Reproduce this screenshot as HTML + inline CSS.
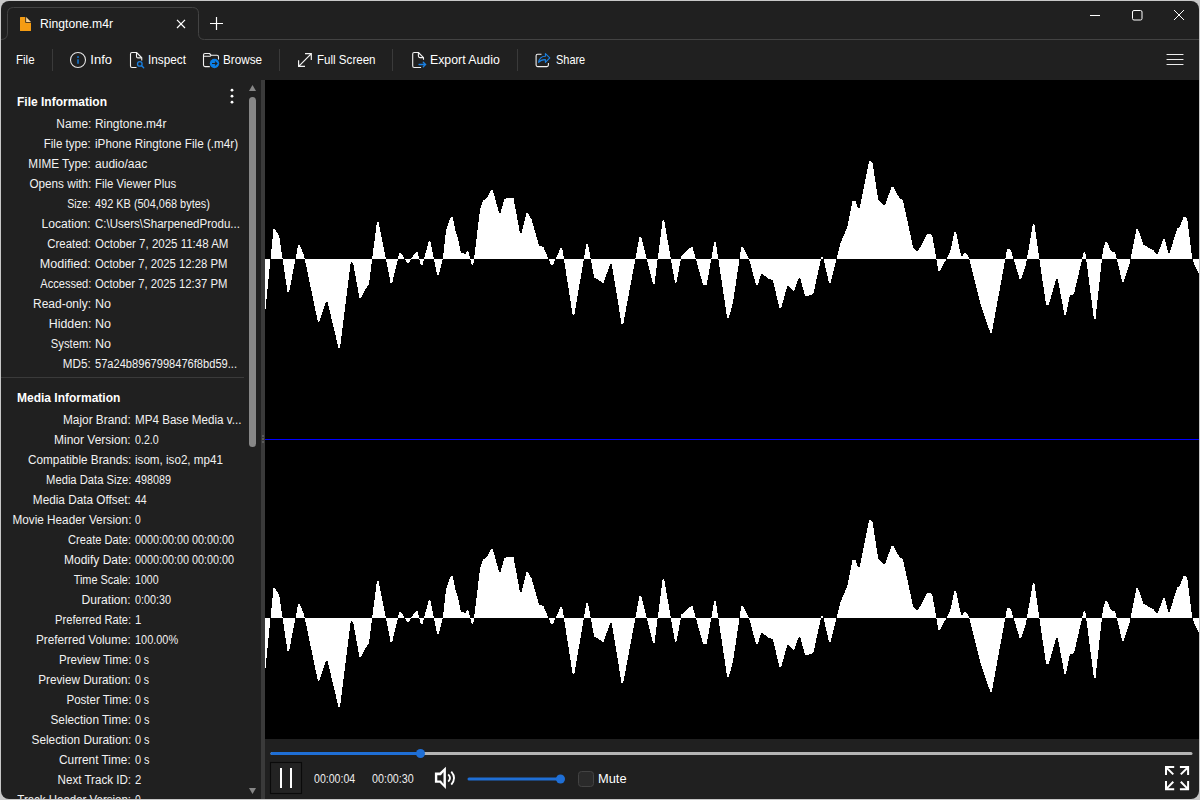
<!DOCTYPE html>
<html><head><meta charset="utf-8">
<style>
html,body{margin:0;padding:0;width:1200px;height:800px;overflow:hidden;background:#c8c8c8;font-family:"Liberation Sans", sans-serif;}
#win{position:absolute;left:1px;top:1px;width:1198px;height:798px;border-radius:8px;background:#202020;overflow:hidden;}
#c{position:absolute;left:-1px;top:-1px;width:1200px;height:800px;}
.t{position:absolute;white-space:nowrap;color:#fff;line-height:18px;}
.lab,.val{position:absolute;white-space:nowrap;color:#f2f2f2;font-size:12px;line-height:18px;}
.lab span{display:inline-block;transform-origin:100% 50%;}
.val span{display:inline-block;transform-origin:0 50%;}
.hd{position:absolute;white-space:nowrap;color:#fff;font-size:12px;font-weight:bold;line-height:18px;}
svg{position:absolute;left:0;top:0;}
</style></head><body>
<div id="win"><div id="c">

<!-- tab strip -->
<svg width="1200" height="40" style="left:0;top:0">
<path d="M1 39.5 Q7.5 39.5 7.5 33 L7.5 13.5 Q7.5 7.5 13.5 7.5 L192.5 7.5 Q198.5 7.5 198.5 13.5 L198.5 33.5 Q198.5 39.5 204.5 39.5 L1200 39.5" fill="none" stroke="#434343" stroke-width="1"/>
<path d="M20.6 17 L25.3 17 L25.3 22.8 L31 22.8 L31 30.4 Q31 31 30.4 31 L20.6 31 Q20 31 20 30.4 L20 17.6 Q20 17 20.6 17 Z" fill="#f59c12"/>
<path d="M26.1 17 L31 21.9 L26.1 21.9 Z" fill="#f9d49a"/>
<path d="M177 19.8 L185 28 M185 19.8 L177 28" stroke="#fff" stroke-width="1.2" fill="none"/>
<path d="M210 23.5 L223 23.5 M216.5 17 L216.5 30" stroke="#fff" stroke-width="1.2" fill="none"/>
<path d="M1090 15.5 L1100 15.5" stroke="#fff" stroke-width="1"/>
<rect x="1132.5" y="10.5" width="9.5" height="9.5" rx="1.5" stroke="#fff" stroke-width="1" fill="none"/>
<path d="M1174 10 L1184 20 M1184 10 L1174 20" stroke="#fff" stroke-width="1" fill="none"/>
</svg>
<div class="t" style="left:40.30px;top:15px;font-size:13px;"><span style="display:inline-block;transform-origin:0 50%;transform:scaleX(0.9351)">Ringtone.m4r</span></div>

<!-- toolbar -->
<div class="t" style="left:16.23px;top:51px;font-size:13px;"><span style="display:inline-block;transform-origin:0 50%;transform:scaleX(0.8851)">File</span></div>
<div class="t" style="left:90.30px;top:51px;font-size:13px;"><span style="display:inline-block;transform-origin:0 50%;transform:scaleX(1.0000)">Info</span></div>
<div class="t" style="left:148.30px;top:51px;font-size:13px;"><span style="display:inline-block;transform-origin:0 50%;transform:scaleX(0.9051)">Inspect</span></div>
<div class="t" style="left:223.44px;top:51px;font-size:13px;"><span style="display:inline-block;transform-origin:0 50%;transform:scaleX(0.9002)">Browse</span></div>
<div class="t" style="left:317.23px;top:51px;font-size:13px;"><span style="display:inline-block;transform-origin:0 50%;transform:scaleX(0.8906)">Full Screen</span></div>
<div class="t" style="left:430.23px;top:51px;font-size:13px;"><span style="display:inline-block;transform-origin:0 50%;transform:scaleX(0.9466)">Export Audio</span></div>
<div class="t" style="left:555.58px;top:51px;font-size:13px;"><span style="display:inline-block;transform-origin:0 50%;transform:scaleX(0.8417)">Share</span></div>
<svg width="1200" height="80" style="left:0;top:0">
<g stroke="#3a3a3a" stroke-width="1">
<path d="M52.5 49 L52.5 71 M279.5 49 L279.5 71 M392.5 49 L392.5 71 M517.5 49 L517.5 71"/>
</g>
<g stroke="#ececec" stroke-width="1.2" stroke-linecap="round">
<path d="M1167 54.5 L1183 54.5 M1167 59.5 L1183 59.5 M1167 64.5 L1183 64.5"/>
</g>
<!-- info -->
<circle cx="78" cy="60" r="7.5" stroke="#e4e4e4" stroke-width="1.1" fill="none"/>
<rect x="77" y="56" width="2" height="2" rx="0.6" fill="#1562a8"/>
<rect x="77" y="59.2" width="2" height="4.6" rx="0.4" fill="#1562a8"/>
<!-- inspect -->
<g fill="none" stroke="#f2f2f2" stroke-width="1.1" stroke-linejoin="round">
<path d="M136.5 67.5 H132 Q130.5 67.5 130.5 66 V54 Q130.5 52.5 132 52.5 H136.5 L141.75 57.75 V60.5"/>
<path d="M136.5 52.6 V56.4 Q136.5 57.9 138 57.9 H141.7"/>
</g>
<circle cx="139.8" cy="63.9" r="2.3" stroke="#1a80e2" stroke-width="1.3" fill="none"/>
<path d="M141.6 65.7 L143.7 67.7" stroke="#1a80e2" stroke-width="1.4" stroke-linecap="round"/>
<!-- browse -->
<g fill="none" stroke="#f2f2f2" stroke-width="1.1" stroke-linejoin="round">
<path d="M209.8 66.6 H205 Q203.5 66.6 203.5 65.1 V55 Q203.5 53.5 205 53.5 H209.5 L211.2 55.3 H217 Q218.5 55.3 218.5 56.8 V59.5"/>
<path d="M203.5 56.3 H210 L211.2 55.3"/>
</g>
<circle cx="214.5" cy="63.5" r="4.7" fill="#0b7fe6"/>
<path d="M212 63.5 H216.8 M215 61.7 L216.9 63.5 L215 65.3" stroke="#202020" stroke-width="1.1" fill="none"/>
<!-- full screen -->
<g fill="none" stroke="#f2f2f2" stroke-width="1.2" stroke-linejoin="miter">
<path d="M299.2 65.8 L311.1 53.9 M305 53.7 H311.3 V60 M298.6 60.2 V66.3 H305"/>
</g>
<!-- export -->
<g fill="none" stroke="#f2f2f2" stroke-width="1.1" stroke-linejoin="round">
<path d="M421.1 67.5 H414.2 Q412.7 67.5 412.7 66 V54 Q412.7 52.5 414.2 52.5 H418.4 L423.5 57.6 V59.7"/>
<path d="M418.4 52.6 V56.1 Q418.4 57.6 419.9 57.6 H423.4"/>
</g>
<path d="M419 64.5 H425.6 M423.3 62.2 L425.6 64.5 L423.3 66.8" stroke="#1a80e2" stroke-width="1.3" fill="none" stroke-linecap="round"/>
<!-- share -->
<path d="M541.5 54.3 H537.6 Q536.1 54.3 536.1 55.8 V65.1 Q536.1 66.6 537.6 66.6 H546.9 Q548.4 66.6 548.4 65.1 V63" fill="none" stroke="#f2f2f2" stroke-width="1.1"/>
<path d="M538.6 62.4 Q539.5 56.2 545.4 56.2 V53.6 L549.8 57.9 L545.4 62.3 V59.6 Q541 59.4 538.6 62.4 Z" fill="none" stroke="#1a80e2" stroke-width="1.1" stroke-linejoin="round"/>
</svg>

<!-- sidebar -->
<div class="hd" style="left:17px;top:93px">File Information</div>
<div class="lab" style="top:115px;right:1109.0px"><span style="transform:scaleX(0.9912)">Name:</span></div>
<div class="val" style="top:115px;left:95.0px"><span style="transform:scaleX(0.9916)">Ringtone.m4r</span></div>
<div class="lab" style="top:135px;right:1109.0px"><span style="transform:scaleX(0.9660)">File type:</span></div>
<div class="val" style="top:135px;left:95.0px"><span style="transform:scaleX(0.9753)">iPhone Ringtone File (.m4r)</span></div>
<div class="lab" style="top:155px;right:1109.0px"><span style="transform:scaleX(0.9790)">MIME Type:</span></div>
<div class="val" style="top:155px;left:95.0px"><span style="transform:scaleX(1.0040)">audio/aac</span></div>
<div class="lab" style="top:175px;right:1109.0px"><span style="transform:scaleX(0.9777)">Opens with:</span></div>
<div class="val" style="top:175px;left:95.0px"><span style="transform:scaleX(0.9460)">File Viewer Plus</span></div>
<div class="lab" style="top:195px;right:1109.0px"><span style="transform:scaleX(0.8800)">Size:</span></div>
<div class="val" style="top:195px;left:95.0px"><span style="transform:scaleX(0.9111)">492 KB (504,068 bytes)</span></div>
<div class="lab" style="top:215px;right:1109.0px"><span style="transform:scaleX(1.0086)">Location:</span></div>
<div class="val" style="top:215px;left:95.0px"><span style="transform:scaleX(0.9614)">C:\Users\SharpenedProdu...</span></div>
<div class="lab" style="top:235px;right:1109.0px"><span style="transform:scaleX(0.9489)">Created:</span></div>
<div class="val" style="top:235px;left:95.0px"><span style="transform:scaleX(0.9583)">October 7, 2025 11:48 AM</span></div>
<div class="lab" style="top:255px;right:1109.0px"><span style="transform:scaleX(1.0470)">Modified:</span></div>
<div class="val" style="top:255px;left:95.0px"><span style="transform:scaleX(0.9400)">October 7, 2025 12:28 PM</span></div>
<div class="lab" style="top:275px;right:1109.0px"><span style="transform:scaleX(0.9228)">Accessed:</span></div>
<div class="val" style="top:275px;left:95.0px"><span style="transform:scaleX(0.9400)">October 7, 2025 12:37 PM</span></div>
<div class="lab" style="top:295px;right:1109.0px"><span style="transform:scaleX(1.0000)">Read-only:</span></div>
<div class="val" style="top:295px;left:95.0px"><span style="transform:scaleX(1.0453)">No</span></div>
<div class="lab" style="top:315px;right:1109.0px"><span style="transform:scaleX(1.0302)">Hidden:</span></div>
<div class="val" style="top:315px;left:95.0px"><span style="transform:scaleX(1.0453)">No</span></div>
<div class="lab" style="top:335px;right:1109.0px"><span style="transform:scaleX(0.9340)">System:</span></div>
<div class="val" style="top:335px;left:95.0px"><span style="transform:scaleX(1.0453)">No</span></div>
<div class="lab" style="top:355px;right:1109.0px"><span style="transform:scaleX(0.9711)">MD5:</span></div>
<div class="val" style="top:355px;left:95.0px"><span style="transform:scaleX(0.9250)">57a24b8967998476f8bd59...</span></div>
<div class="hd" style="left:17px;top:389px">Media Information</div>
<div class="lab" style="top:411px;right:1069.0px"><span style="transform:scaleX(0.9852)">Major Brand:</span></div>
<div class="val" style="top:411px;left:135.0px"><span style="transform:scaleX(0.9686)">MP4 Base Media v...</span></div>
<div class="lab" style="top:431px;right:1069.0px"><span style="transform:scaleX(1.0001)">Minor Version:</span></div>
<div class="val" style="top:431px;left:135.0px"><span style="transform:scaleX(0.8889)">0.2.0</span></div>
<div class="lab" style="top:451px;right:1069.0px"><span style="transform:scaleX(0.9808)">Compatible Brands:</span></div>
<div class="val" style="top:451px;left:135.0px"><span style="transform:scaleX(0.9693)">isom, iso2, mp41</span></div>
<div class="lab" style="top:471px;right:1069.0px"><span style="transform:scaleX(0.9334)">Media Data Size:</span></div>
<div class="val" style="top:471px;left:135.0px"><span style="transform:scaleX(0.9000)">498089</span></div>
<div class="lab" style="top:491px;right:1069.0px"><span style="transform:scaleX(0.9817)">Media Data Offset:</span></div>
<div class="val" style="top:491px;left:135.0px"><span style="transform:scaleX(0.8763)">44</span></div>
<div class="lab" style="top:511px;right:1069.0px"><span style="transform:scaleX(0.9800)">Movie Header Version:</span></div>
<div class="val" style="top:511px;left:135.0px"><span style="transform:scaleX(0.8571)">0</span></div>
<div class="lab" style="top:531px;right:1069.0px"><span style="transform:scaleX(0.9256)">Create Date:</span></div>
<div class="val" style="top:531px;left:135.0px"><span style="transform:scaleX(0.9000)">0000:00:00 00:00:00</span></div>
<div class="lab" style="top:551px;right:1069.0px"><span style="transform:scaleX(1.0002)">Modify Date:</span></div>
<div class="val" style="top:551px;left:135.0px"><span style="transform:scaleX(0.9000)">0000:00:00 00:00:00</span></div>
<div class="lab" style="top:571px;right:1069.0px"><span style="transform:scaleX(0.9097)">Time Scale:</span></div>
<div class="val" style="top:571px;left:135.0px"><span style="transform:scaleX(0.8862)">1000</span></div>
<div class="lab" style="top:591px;right:1069.0px"><span style="transform:scaleX(1.0088)">Duration:</span></div>
<div class="val" style="top:591px;left:135.0px"><span style="transform:scaleX(0.9000)">0:00:30</span></div>
<div class="lab" style="top:611px;right:1069.0px"><span style="transform:scaleX(0.9254)">Preferred Rate:</span></div>
<div class="val" style="top:611px;left:135.0px"><span style="transform:scaleX(0.9519)">1</span></div>
<div class="lab" style="top:631px;right:1069.0px"><span style="transform:scaleX(0.9790)">Preferred Volume:</span></div>
<div class="val" style="top:631px;left:135.0px"><span style="transform:scaleX(0.9095)">100.00%</span></div>
<div class="lab" style="top:651px;right:1069.0px"><span style="transform:scaleX(0.9596)">Preview Time:</span></div>
<div class="val" style="top:651px;left:135.0px"><span style="transform:scaleX(0.8750)">0 s</span></div>
<div class="lab" style="top:671px;right:1069.0px"><span style="transform:scaleX(0.9764)">Preview Duration:</span></div>
<div class="val" style="top:671px;left:135.0px"><span style="transform:scaleX(0.8750)">0 s</span></div>
<div class="lab" style="top:691px;right:1069.0px"><span style="transform:scaleX(0.9638)">Poster Time:</span></div>
<div class="val" style="top:691px;left:135.0px"><span style="transform:scaleX(0.8750)">0 s</span></div>
<div class="lab" style="top:711px;right:1069.0px"><span style="transform:scaleX(0.9816)">Selection Time:</span></div>
<div class="val" style="top:711px;left:135.0px"><span style="transform:scaleX(0.9082)">0 s</span></div>
<div class="lab" style="top:731px;right:1069.0px"><span style="transform:scaleX(0.9850)">Selection Duration:</span></div>
<div class="val" style="top:731px;left:135.0px"><span style="transform:scaleX(0.9082)">0 s</span></div>
<div class="lab" style="top:751px;right:1069.0px"><span style="transform:scaleX(0.9861)">Current Time:</span></div>
<div class="val" style="top:751px;left:135.0px"><span style="transform:scaleX(0.9082)">0 s</span></div>
<div class="lab" style="top:771px;right:1069.0px"><span style="transform:scaleX(0.9663)">Next Track ID:</span></div>
<div class="val" style="top:771px;left:135.0px"><span style="transform:scaleX(0.9386)">2</span></div>
<div class="lab" style="top:791px;right:1069.0px"><span style="transform:scaleX(0.9550)">Track Header Version:</span></div>
<div class="val" style="top:791px;left:135.0px"><span style="transform:scaleX(0.8600)">0</span></div>
<svg width="270" height="800" style="left:0;top:0">
<rect x="1" y="377" width="243" height="1" fill="#3a3a3a"/>
<circle cx="232" cy="90.2" r="1.4" fill="#fff"/><circle cx="232" cy="96.2" r="1.4" fill="#fff"/><circle cx="232" cy="102.2" r="1.4" fill="#fff"/>
<path d="M249 91 L256 91 L252.5 85 Z" fill="#878787"/>
<path d="M249 788 L256 788 L252.5 794 Z" fill="#878787"/>
<rect x="249" y="97" width="7" height="350" rx="3.5" fill="#878787"/>
<rect x="261" y="80" width="4" height="720" fill="#3a3a3a"/>
<rect x="262" y="435" width="2" height="2" fill="#5a5a5a"/><rect x="262" y="438" width="2" height="2" fill="#5a5a5a"/><rect x="262" y="441" width="2" height="2" fill="#5a5a5a"/>
</svg>

<!-- waveform -->
<svg width="1200" height="800" style="left:0;top:0">
<rect x="265" y="80" width="935" height="659" fill="#000"/>
<path d="M265 259 L265.00 314.00 L273.50 229.40 L275.10 229.40 L279.20 236.00 L287.50 292.00 L289.10 292.00 L298.20 245.00 L299.80 245.00 L304.00 255.50 L317.80 321.50 L319.40 321.50 L326.00 302.00 L327.60 302.00 L338.40 347.60 L340.00 347.60 L350.70 262.40 L352.30 262.40 L353.50 265.00 L359.50 298.00 L361.10 298.00 L365.80 288.50 L369.00 284.00 L376.90 221.70 L378.50 221.70 L390.60 283.00 L392.20 283.00 L399.40 252.70 L401.00 252.70 L407.10 263.20 L408.70 263.20 L414.00 254.00 L415.90 252.20 L417.50 252.20 L420.80 265.00 L422.40 265.00 L428.80 241.20 L430.40 241.20 L437.10 275.30 L438.70 275.30 L443.00 258.00 L446.00 231.00 L449.00 221.00 L451.10 216.50 L452.70 216.50 L455.00 229.00 L458.00 238.00 L461.00 253.00 L464.20 253.50 L465.80 253.50 L466.80 251.40 L468.40 251.40 L471.70 265.00 L473.30 265.00 L480.00 210.00 L482.70 201.00 L487.70 197.20 L491.00 189.50 L492.60 189.50 L499.00 212.90 L500.60 212.90 L504.20 199.10 L506.10 198.30 L513.50 198.30 L519.90 232.70 L521.50 232.70 L526.50 213.40 L528.10 213.40 L531.70 219.70 L539.10 245.90 L543.20 246.70 L551.20 265.10 L552.80 265.10 L560.60 248.00 L562.20 248.00 L572.70 315.20 L574.30 315.20 L586.40 244.00 L588.00 244.00 L594.10 277.50 L598.20 279.70 L602.10 282.50 L603.70 282.50 L610.10 264.30 L611.70 264.30 L621.60 324.20 L623.20 324.20 L639.50 236.80 L641.10 236.80 L653.00 283.50 L654.60 283.50 L662.60 220.30 L664.20 220.30 L674.90 282.50 L676.50 282.50 L681.50 255.50 L690.90 247.20 L692.50 247.20 L703.20 285.20 L704.80 285.20 L706.80 284.40 L714.20 242.30 L715.80 242.30 L727.20 318.20 L728.80 318.20 L733.00 302.30 L741.30 247.20 L742.90 247.20 L748.90 258.30 L756.10 285.20 L757.70 285.20 L761.10 274.20 L762.70 274.20 L768.70 278.90 L772.90 280.20 L779.50 308.30 L781.10 308.30 L787.20 286.30 L788.80 286.30 L792.70 290.70 L794.30 290.70 L798.70 278.00 L800.30 278.00 L805.00 296.20 L806.60 296.20 L813.30 294.00 L821.50 256.90 L823.10 256.90 L829.00 283.00 L830.60 283.00 L840.20 244.00 L847.10 227.50 L852.60 201.00 L853.70 200.50 L855.30 200.50 L858.10 208.20 L859.70 208.20 L869.10 160.60 L870.70 160.60 L872.60 163.40 L878.10 199.10 L883.40 205.40 L885.00 205.40 L891.60 186.70 L893.20 186.70 L899.30 197.80 L902.90 200.00 L913.10 247.20 L916.40 250.60 L918.00 250.60 L921.30 245.90 L927.40 233.50 L929.00 233.50 L932.30 235.70 L938.40 270.60 L940.00 270.60 L946.10 259.60 L950.30 251.40 L954.40 232.10 L956.00 232.10 L961.00 255.50 L962.60 255.50 L964.60 253.30 L966.20 253.30 L969.00 257.70 L980.00 302.30 L990.20 332.50 L991.80 332.50 L1007.20 248.60 L1008.80 248.60 L1010.80 250.00 L1019.60 278.90 L1021.20 278.90 L1025.90 265.10 L1032.80 223.90 L1034.40 223.90 L1039.60 261.00 L1046.00 304.20 L1047.10 305.00 L1048.70 305.00 L1056.20 278.90 L1057.80 278.90 L1064.40 314.60 L1066.00 314.60 L1069.90 295.40 L1074.00 294.00 L1083.70 252.20 L1085.30 252.20 L1093.90 318.80 L1095.50 318.80 L1102.90 250.00 L1105.40 241.80 L1107.00 241.80 L1111.20 251.40 L1115.30 252.70 L1122.20 281.60 L1123.80 281.60 L1129.60 263.80 L1136.50 229.40 L1138.10 229.40 L1143.30 244.50 L1146.90 246.70 L1153.20 250.00 L1156.30 254.10 L1157.90 254.10 L1163.20 238.80 L1164.80 238.80 L1168.10 252.70 L1169.70 252.70 L1177.20 228.50 L1179.90 226.60 L1183.80 216.50 L1185.40 216.50 L1187.40 219.70 L1192.30 258.80 L1195.10 266.50 L1198.40 272.50 L1200.00 275.00 L1200 259 Z" fill="#fff" shape-rendering="crispEdges"/>
<path d="M265 618 L265.00 673.00 L273.50 588.40 L275.10 588.40 L279.20 595.00 L287.50 651.00 L289.10 651.00 L298.20 604.00 L299.80 604.00 L304.00 614.50 L317.80 680.50 L319.40 680.50 L326.00 661.00 L327.60 661.00 L338.40 706.60 L340.00 706.60 L350.70 621.40 L352.30 621.40 L353.50 624.00 L359.50 657.00 L361.10 657.00 L365.80 647.50 L369.00 643.00 L376.90 580.70 L378.50 580.70 L390.60 642.00 L392.20 642.00 L399.40 611.70 L401.00 611.70 L407.10 622.20 L408.70 622.20 L414.00 613.00 L415.90 611.20 L417.50 611.20 L420.80 624.00 L422.40 624.00 L428.80 600.20 L430.40 600.20 L437.10 634.30 L438.70 634.30 L443.00 617.00 L446.00 590.00 L449.00 580.00 L451.10 575.50 L452.70 575.50 L455.00 588.00 L458.00 597.00 L461.00 612.00 L464.20 612.50 L465.80 612.50 L466.80 610.40 L468.40 610.40 L471.70 624.00 L473.30 624.00 L480.00 569.00 L482.70 560.00 L487.70 556.20 L491.00 548.50 L492.60 548.50 L499.00 571.90 L500.60 571.90 L504.20 558.10 L506.10 557.30 L513.50 557.30 L519.90 591.70 L521.50 591.70 L526.50 572.40 L528.10 572.40 L531.70 578.70 L539.10 604.90 L543.20 605.70 L551.20 624.10 L552.80 624.10 L560.60 607.00 L562.20 607.00 L572.70 674.20 L574.30 674.20 L586.40 603.00 L588.00 603.00 L594.10 636.50 L598.20 638.70 L602.10 641.50 L603.70 641.50 L610.10 623.30 L611.70 623.30 L621.60 683.20 L623.20 683.20 L639.50 595.80 L641.10 595.80 L653.00 642.50 L654.60 642.50 L662.60 579.30 L664.20 579.30 L674.90 641.50 L676.50 641.50 L681.50 614.50 L690.90 606.20 L692.50 606.20 L703.20 644.20 L704.80 644.20 L706.80 643.40 L714.20 601.30 L715.80 601.30 L727.20 677.20 L728.80 677.20 L733.00 661.30 L741.30 606.20 L742.90 606.20 L748.90 617.30 L756.10 644.20 L757.70 644.20 L761.10 633.20 L762.70 633.20 L768.70 637.90 L772.90 639.20 L779.50 667.30 L781.10 667.30 L787.20 645.30 L788.80 645.30 L792.70 649.70 L794.30 649.70 L798.70 637.00 L800.30 637.00 L805.00 655.20 L806.60 655.20 L813.30 653.00 L821.50 615.90 L823.10 615.90 L829.00 642.00 L830.60 642.00 L840.20 603.00 L847.10 586.50 L852.60 560.00 L853.70 559.50 L855.30 559.50 L858.10 567.20 L859.70 567.20 L869.10 519.60 L870.70 519.60 L872.60 522.40 L878.10 558.10 L883.40 564.40 L885.00 564.40 L891.60 545.70 L893.20 545.70 L899.30 556.80 L902.90 559.00 L913.10 606.20 L916.40 609.60 L918.00 609.60 L921.30 604.90 L927.40 592.50 L929.00 592.50 L932.30 594.70 L938.40 629.60 L940.00 629.60 L946.10 618.60 L950.30 610.40 L954.40 591.10 L956.00 591.10 L961.00 614.50 L962.60 614.50 L964.60 612.30 L966.20 612.30 L969.00 616.70 L980.00 661.30 L990.20 691.50 L991.80 691.50 L1007.20 607.60 L1008.80 607.60 L1010.80 609.00 L1019.60 637.90 L1021.20 637.90 L1025.90 624.10 L1032.80 582.90 L1034.40 582.90 L1039.60 620.00 L1046.00 663.20 L1047.10 664.00 L1048.70 664.00 L1056.20 637.90 L1057.80 637.90 L1064.40 673.60 L1066.00 673.60 L1069.90 654.40 L1074.00 653.00 L1083.70 611.20 L1085.30 611.20 L1093.90 677.80 L1095.50 677.80 L1102.90 609.00 L1105.40 600.80 L1107.00 600.80 L1111.20 610.40 L1115.30 611.70 L1122.20 640.60 L1123.80 640.60 L1129.60 622.80 L1136.50 588.40 L1138.10 588.40 L1143.30 603.50 L1146.90 605.70 L1153.20 609.00 L1156.30 613.10 L1157.90 613.10 L1163.20 597.80 L1164.80 597.80 L1168.10 611.70 L1169.70 611.70 L1177.20 587.50 L1179.90 585.60 L1183.80 575.50 L1185.40 575.50 L1187.40 578.70 L1192.30 617.80 L1195.10 625.50 L1198.40 631.50 L1200.00 634.00 L1200 618 Z" fill="#fff" shape-rendering="crispEdges"/>
<rect x="265" y="439" width="935" height="1" fill="#0000ff"/>
</svg>

<!-- controls -->
<svg width="1200" height="800" style="left:0;top:0">
<line x1="272" y1="753.5" x2="1191" y2="753.5" stroke="#b4b4b4" stroke-width="3" stroke-linecap="round"/>
<line x1="272" y1="753.5" x2="420" y2="753.5" stroke="#1f6fd6" stroke-width="3" stroke-linecap="round"/>
<circle cx="420.5" cy="753.5" r="4.5" fill="#1f6fd6"/>
<rect x="270.5" y="762.5" width="31" height="31" fill="#232323" stroke="#0a0a0a" stroke-width="1.1"/>
<rect x="280" y="768" width="2" height="20" fill="#fff"/>
<rect x="290" y="768" width="2" height="20" fill="#fff"/>
<line x1="469" y1="779" x2="560" y2="779" stroke="#1f6fd6" stroke-width="3" stroke-linecap="round"/>
<circle cx="560.5" cy="779" r="4.5" fill="#1f6fd6"/>
<rect x="578.5" y="771.5" width="15" height="15" rx="3" fill="#2a2a2a" stroke="#434343" stroke-width="1"/>
<path fill="#fff" fill-rule="evenodd" d="M434.9 772.6 H439.75 L445.9 766.8 V789.1 L439.75 782.75 H434.9 Z M437.3 775.25 V780.5 H440.9 L443.5 783.9 V772 L440.9 775.25 Z"/>
<path d="M448.2 774.3 Q451.8 778 448.2 781.7 M451.3 771.6 Q456.8 778 451.3 784.6" stroke="#fff" stroke-width="1.8" fill="none"/>
<g stroke="#fff" stroke-width="2" fill="none" stroke-linejoin="miter">
<path d="M1174.2 767.1 H1166 V775.1 M1166.6 767.7 L1173.3 774.4"/>
<path d="M1179.9 767.1 H1188.1 V775.1 M1187.5 767.7 L1180.8 774.4"/>
<path d="M1166 781 V789.2 H1174.2 M1166.6 788.6 L1173.3 781.7"/>
<path d="M1188.1 781 V789.2 H1179.9 M1187.5 788.6 L1180.8 781.7"/>
</g>
</svg>
<div class="t" style="left:314.00px;top:770px;font-size:12px;color:#eee"><span style="display:inline-block;transform-origin:0 50%;transform:scaleX(0.8809)">00:00:04</span></div>
<div class="t" style="left:372.00px;top:770px;font-size:12px;color:#eee"><span style="display:inline-block;transform-origin:0 50%;transform:scaleX(0.8936)">00:00:30</span></div>
<div class="t" style="left:598.14px;top:770px;font-size:12px;"><span style="display:inline-block;transform-origin:0 50%;transform:scaleX(1.0696)">Mute</span></div>

</div></div>
</body></html>
